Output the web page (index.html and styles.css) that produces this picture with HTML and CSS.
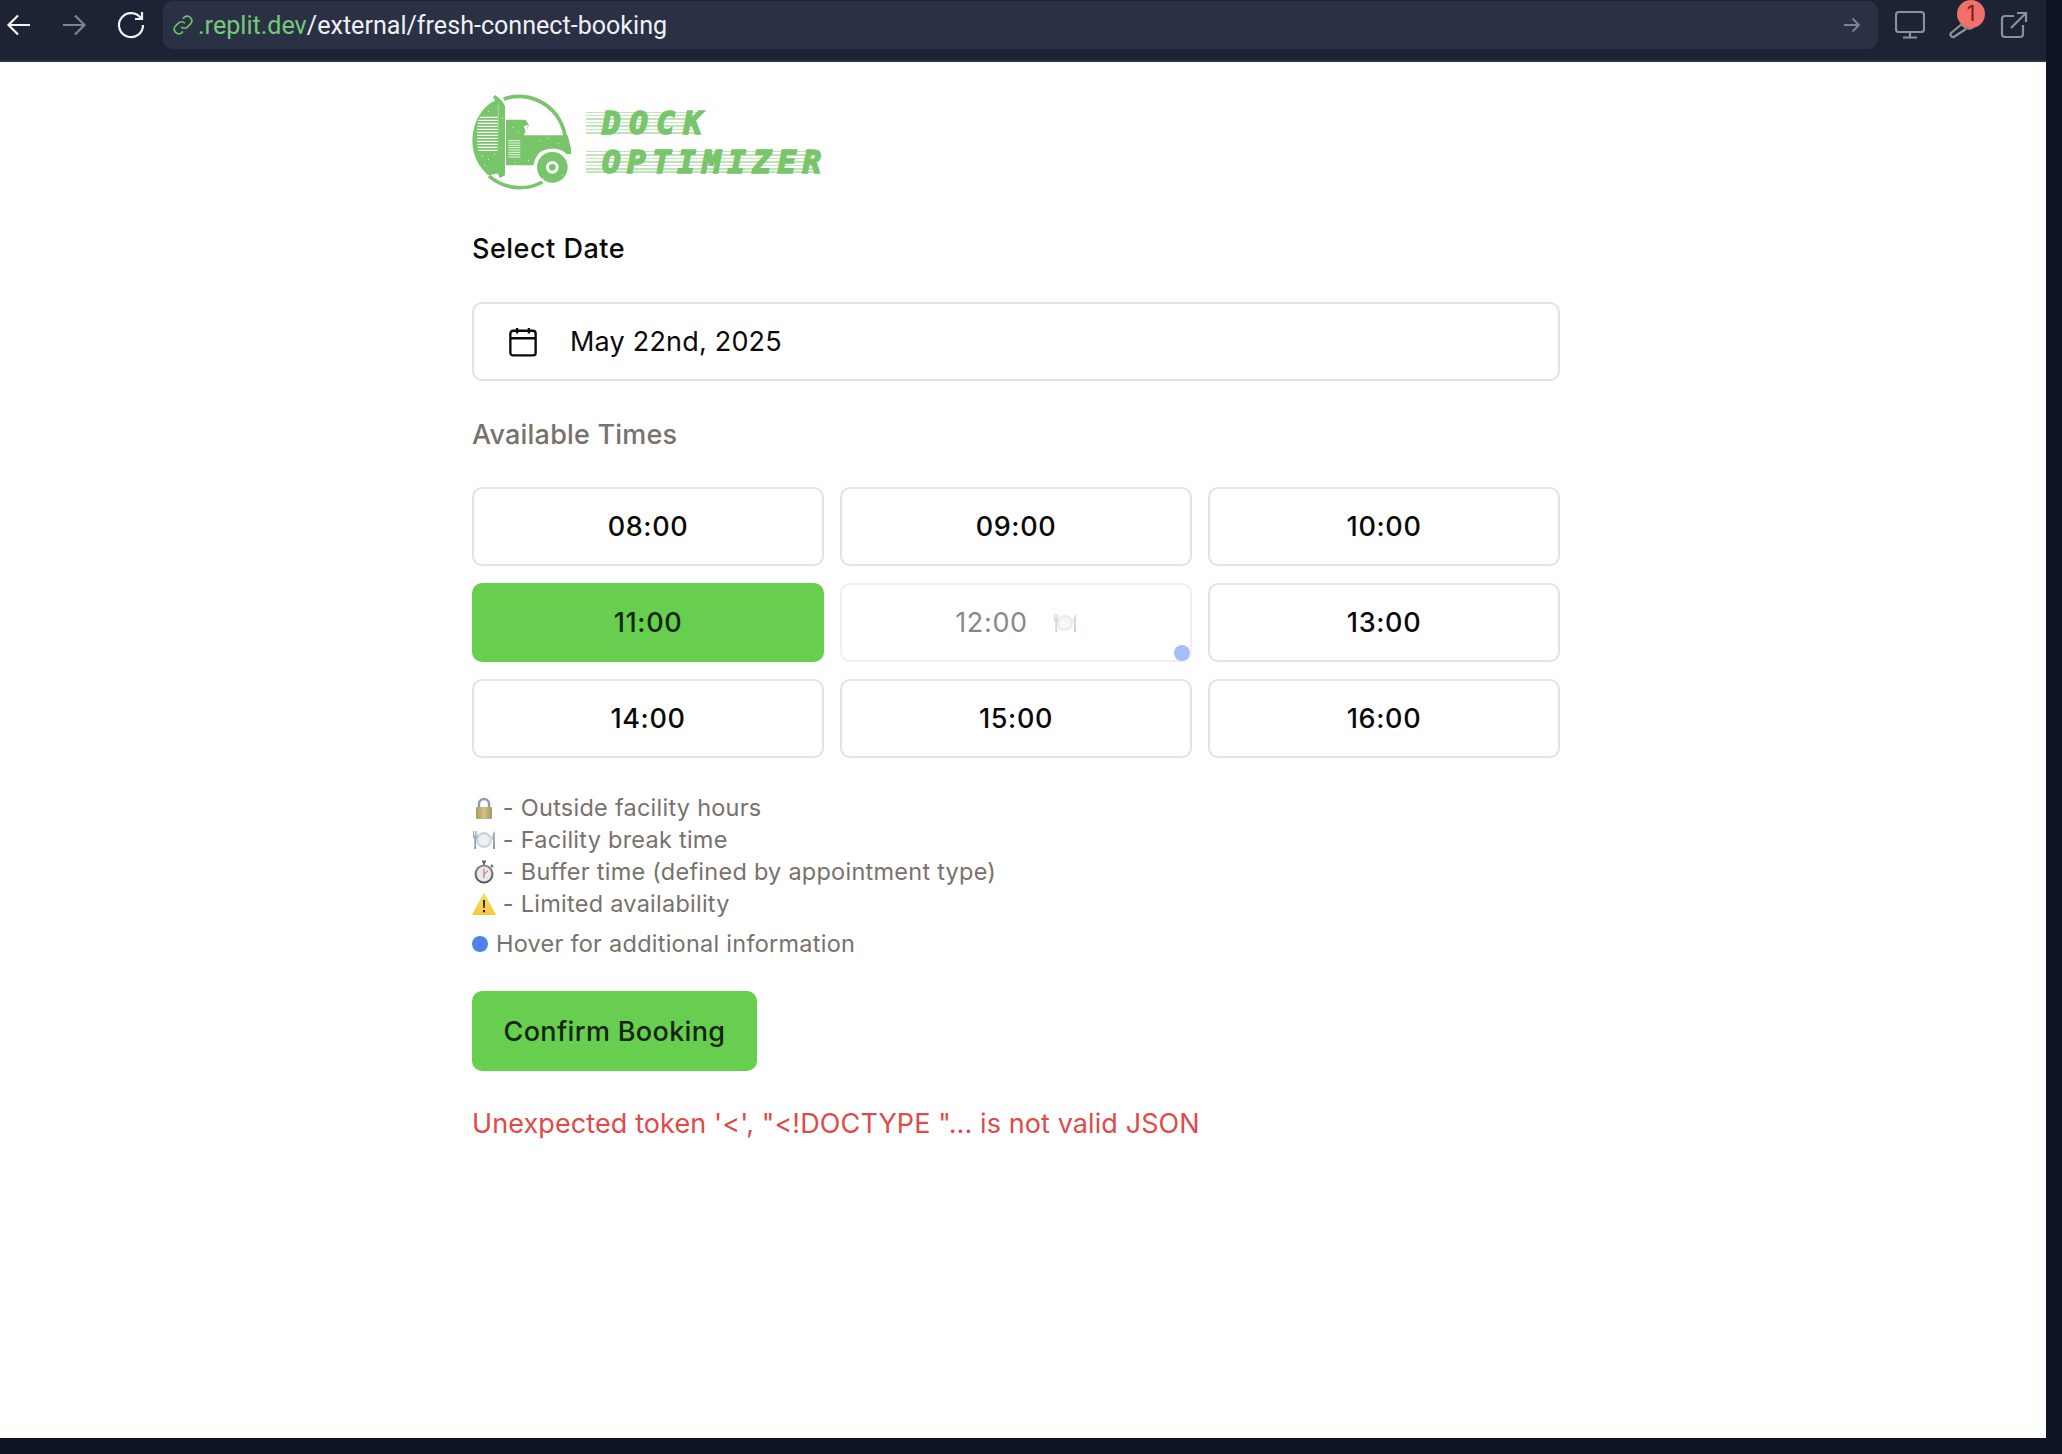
FILE: index.html
```html
<!DOCTYPE html>
<html lang="en">
<head>
<meta charset="utf-8">
<title>Dock Optimizer</title>
<link rel="stylesheet" href="styles.css">
</head>
<body>
<svg class="defs" width="0" height="0" aria-hidden="true">
  <defs>
    <linearGradient id="gold" x1="0" y1="0" x2="1" y2="0"><stop offset="0" stop-color="#a89c58"/><stop offset=".5" stop-color="#cfc488"/><stop offset="1" stop-color="#a3965a"/></linearGradient>
    <linearGradient id="cutlery" x1="0" y1="0" x2="0" y2="1"><stop offset="0" stop-color="#a9bacb"/><stop offset="1" stop-color="#7f95ab"/></linearGradient>
    <linearGradient id="amber" x1="0" y1="0" x2="0" y2="1"><stop offset="0" stop-color="#fbdc6a"/><stop offset="1" stop-color="#f6c83c"/></linearGradient>
    <linearGradient id="steel" x1="0" y1="0" x2="0" y2="1"><stop offset="0" stop-color="#8b8b90"/><stop offset="1" stop-color="#55555a"/></linearGradient>
    <symbol id="i-lock" viewBox="0 0 24 24">
      <path d="M7 12V8a5 5 0 0 1 10 0v4" fill="none" stroke="#8e9bb0" stroke-width="2.4"/>
      <rect x="4" y="11" width="16" height="12" rx="1" fill="url(#gold)"/>
    </symbol>
    <symbol id="i-plate" viewBox="0 0 24 24">
      <circle cx="12" cy="12" r="8" fill="#cfd5dc"/>
      <circle cx="12" cy="12" r="5.600" fill="#eef0f3"/>
      <path d="M1 3v6c0 1 .8 1.600 1.300 2v10h1.800V11c.5-.4 1.300-1 1.300-2V3h-.9v4.500h-.6V3h-.9v4.500h-.6V3z" fill="url(#cutlery)"/>
      <path d="M23 3c-2 1.400-2.800 4-2.800 8.500h.9V21H23z" fill="url(#cutlery)"/>
    </symbol>
    <symbol id="i-watch" viewBox="0 0 24 24">
      <path d="M10 1.500h4M12 2v3M19 5l2 2" stroke="#66666b" stroke-width="2" fill="none"/>
      <circle cx="12" cy="14" r="9.500" fill="url(#steel)"/>
      <circle cx="12" cy="14" r="7.400" fill="#e9e9ec"/>
      <path d="M12 8.500V14l4-3" stroke="#c7654e" stroke-width="1" fill="none"/>
      <path d="M12 14v4" stroke="#77777c" stroke-width="1" fill="none"/>
    </symbol>
    <symbol id="i-warn" viewBox="0 0 24 24">
      <path d="M12 1.500 23.500 22.500H.5z" fill="url(#amber)" stroke="url(#amber)" stroke-linejoin="round"/>
      <path d="M11 8h2l-.3 8h-1.400zM11 18h2v2.200h-2z" fill="#1a1a1a"/>
    </symbol>
  </defs>
</svg>

<div class="frame">
  <header class="toolbar">
    <svg class="nav" viewBox="0 0 28 28"><path d="M25 14H4M13 4.500 3.500 14l9.500 9.500" stroke="#f1f3f6"/></svg>
    <svg class="nav" viewBox="0 0 28 28"><path d="M3 14h21M15 4.500l9.500 9.500-9.500 9.500" stroke="#80848e"/></svg>
    <svg class="nav reload" viewBox="0 0 30 30"><path d="M25 8.500A12 12 0 1 0 27 15M26 2v7h-7" stroke="#f1f3f6"/></svg>
    <div class="address">
      <svg class="link" viewBox="0 0 24 24"><path d="M10 14a5 5 0 0 0 7 0l3.500-3.500a5 5 0 0 0-7-7L12 5M14 10a5 5 0 0 0-7 0l-3.500 3.500a5 5 0 0 0 7 7L12 19"/></svg>
      <span class="url"><span class="host">.replit.dev</span>/external/fresh-connect-booking</span>
      <svg class="go" viewBox="0 0 18 18"><path d="M1 9h15M9.500 2.500 16 9l-6.500 6.500"/></svg>
    </div>
    <div class="tools">
      <svg class="tool" viewBox="0 0 30 28"><rect x="1" y="1" width="28" height="20" rx="3"/><path d="M15 21v5M8 26.500h14"/></svg>
      <div class="wrench">
        <svg class="tool" viewBox="0 0 28 28"><path d="M3 22 14 13a8 8 0 0 0 10 4l1-1M3 22a2.500 2.500 0 0 0 3.500 3.500L18 18"/></svg>
        <span class="badge">1</span>
      </div>
      <svg class="tool" viewBox="0 0 28 28"><path d="M14 5H5a3 3 0 0 0-3 3v15a3 3 0 0 0 3 3h15a3 3 0 0 0 3-3v-9M11 17 26 2M17 2h9v9"/></svg>
    </div>
  </header>

  <main class="page">
    <div class="logo">
      <svg class="truck" viewBox="21 12 300 300">
        <path class="ring" d="M116 33A140 140 0 0 1 301 150"/>
        <path class="ring" d="M72 264A140 140 0 0 0 232 282"/>
        <path class="fill" d="M98 35C55 48 22 100 22 160c0 42 20 78 48 102l34-6z"/>
        <path class="cut" d="M44 88h54M40 97h58M38 106h60M37 115h61M36 124h62M36 133h62M36 142h62M36 151h62M36 160h62M37 169h61M38 178h60M40 187h58"/>
        <path class="fill" d="M84 27 91 21 112 40 120 54V262L105 270 100 262V54z"/>
        <path class="fill" d="M123 95H182L192 112 176 142H308L318 180V198H304C290 178 240 176 222 196 214 206 208 216 206 232H123z"/>
        <path class="paper" d="M176 115 190 110 182 132z"/>
        <path class="cut thin" d="M130 158h36M130 165h36M130 172h36M130 179h36M130 186h36M130 193h36M130 200h36M130 207h36"/>
        <circle class="fill" cx="262" cy="238" r="46"/>
        <circle class="paper" cx="262" cy="238" r="19"/>
        <circle class="fill" cx="262" cy="238" r="10"/>
        <path class="speck" d="M52 205h.1M70 214h.1M88 200h.1M60 232h.1M48 178h.1M144 118h.1M160 132h.1M226 158h.1M280 166h.1M248 152h.1M190 218h.1M150 224h.1M112 90h.1M110 180h.1M236 272h.1M292 262h.1M70 70h.1"/>
      </svg>
      <div class="wordmark">
        <span class="word short">DOCK</span>
        <span class="word">OPTIMIZER</span>
      </div>
    </div>

    <h2 class="label">Select Date</h2>
    <div class="date">
      <svg class="cal" viewBox="0 0 26 28"><rect x="1.200" y="3.500" width="23.600" height="23" rx="2.500"/><path d="M1.200 10.500h23.600M7.500 1v5M18.500 1v5"/></svg>
      <span>May 22nd, 2025</span>
    </div>

    <h2 class="label muted">Available Times</h2>
    <div class="slots">
      <button class="slot">08:00</button>
      <button class="slot">09:00</button>
      <button class="slot">10:00</button>
      <button class="slot active">11:00</button>
      <div class="slot-wrap">
        <button class="slot disabled">12:00<svg class="emoji plate"><use href="#i-plate"/></svg></button>
        <span class="dot"></span>
      </div>
      <button class="slot">13:00</button>
      <button class="slot">14:00</button>
      <button class="slot">15:00</button>
      <button class="slot">16:00</button>
    </div>

    <ul class="legend">
      <li><svg class="emoji"><use href="#i-lock"/></svg> - Outside facility hours</li>
      <li><svg class="emoji"><use href="#i-plate"/></svg> - Facility break time</li>
      <li><svg class="emoji"><use href="#i-watch"/></svg> - Buffer time (defined by appointment type)</li>
      <li><svg class="emoji"><use href="#i-warn"/></svg> - Limited availability</li>
    </ul>
    <p class="hint"><span class="hint-dot"></span>Hover for additional information</p>

    <button class="confirm">Confirm Booking</button>
    <p class="error">Unexpected token '&lt;', "&lt;!DOCTYPE "... is not valid JSON</p>
  </main>
</div>
</body>
</html>
```
FILE: styles.css
```css
* { box-sizing: border-box; }
html, body { margin: 0; height: 100%; }
body { background: #0d1425; overflow: hidden; font-family: Inter, "Liberation Sans", sans-serif; }
.defs { display: block; height: 0; }
.frame { width: 2046px; height: 1438px; display: flex; flex-direction: column; background: #fff; }

.toolbar { height: 62px; flex: none; display: flex; align-items: flex-start; background: #1e2333; border-bottom: 2px solid #2b3144; padding: 1px 0 0 5px; }
.nav { width: 28px; height: 28px; margin-top: 10px; margin-right: 27px; fill: none; flex: none; }
.nav path { stroke-width: 2.2; }
.nav.reload { width: 30px; height: 30px; margin-top: 9px; margin-left: 1px; margin-right: 17px; }
.address { flex: none; width: 1715px; height: 48px; background: #2b3144; border-radius: 10px; display: flex; align-items: center; padding: 0 17px 0 9px; }
.link { width: 22px; height: 22px; fill: none; stroke: #6fbf73; stroke-width: 1.800; margin-right: 4px; flex: none; }
.url { font-family: Roboto, "Liberation Sans", sans-serif; font-size: 25.100px; color: #eef0f4; flex: 1; white-space: nowrap; }
.host { color: #76c878; }
.go { width: 18px; height: 18px; fill: none; stroke: #7f8491; stroke-width: 1.800; flex: none; }
.tools { display: flex; align-items: center; gap: 23px; margin-left: 17px; margin-top: 10px; }
.tool { width: 30px; height: 28px; fill: none; stroke: #8c9099; stroke-width: 2.200; display: block; }
.wrench { position: relative; width: 28px; height: 28px; }
.wrench .tool { width: 28px; }
.badge { position: absolute; left: 9px; top: -11px; width: 28px; height: 28px; border-radius: 50%; background: #f0706a; color: #7a1a16; font-size: 21px; line-height: 28px; text-align: center; }

.page { padding: 30px 0 0 472px; width: 1560px; flex: 1; }
.logo { display: flex; height: 100px; }
.truck { width: 100px; height: 100px; flex: none; }
.truck .ring { fill: none; stroke: #78c56b; stroke-width: 11; }
.truck .fill { fill: #78c56b; }
.truck .paper { fill: #fff; }
.truck .cut { fill: none; stroke: #fff; stroke-width: 3.500; }
.truck .cut.thin { stroke-width: 2.500; }
.truck .speck { fill: none; stroke: #fff; stroke-width: 3; stroke-linecap: round; }
.wordmark { margin-left: 14px; padding-top: 16px; display: flex; flex-direction: column; gap: 9px; align-items: flex-start; }
.word { font-family: "DejaVu Sans Mono", monospace; font-weight: 700; font-style: italic; font-size: 31px; line-height: 30px; height: 30px; letter-spacing: 6.400px; color: #78c56b; -webkit-text-stroke: 1.600px #78c56b; padding-left: 16px; background: repeating-linear-gradient(0deg, #bfe5b8 0 1.500px, #fff 1.500px 3.500px) no-repeat 0 4px / calc(100% - 14px) 22px; }
.word.short { letter-spacing: 8.500px; }

.label { margin: 37px 0 34px; font-size: 27px; line-height: 39px; font-weight: 500; letter-spacing: .5px; color: #0c0a09; }
.label.muted { color: #78716c; margin: 34px 0 33px; letter-spacing: .2px; }
.date { width: 1088px; height: 79px; display: flex; align-items: center; gap: 33px; padding-left: 35px; border: 2px solid #e3e3e3; border-radius: 10px; font-size: 27px; letter-spacing: .2px; color: #0c0a09; }
.cal { width: 28px; height: 30px; fill: none; stroke: #0c0a09; stroke-width: 2.200; flex: none; }

.slots { width: 1088px; display: grid; grid-template-columns: repeat(3, 352px); grid-auto-rows: 79px; gap: 17px 16px; }
.slot { width: 100%; height: 100%; font: 500 27px Inter, "Liberation Sans", sans-serif; letter-spacing: .65px; color: #0c0a09; background: #fff; border: 2px solid #e3e3e3; border-radius: 10px; padding: 0; display: flex; align-items: center; justify-content: center; }
.slot.active { background: #68ce50; border-color: #68ce50; color: #11260c; }
.slot-wrap { position: relative; }
.slot.disabled { opacity: .5; font-weight: 400; border-color: #e3e3e3; color: #111; }
.emoji { width: 24px; height: 24px; flex: none; vertical-align: -4px; }
.emoji.plate { margin-left: 25px; opacity: .85; }
.dot { position: absolute; right: 2px; bottom: 1px; width: 16px; height: 16px; border-radius: 50%; background: #a6bdf8; }

.legend { list-style: none; margin: 34px 0 8px; padding: 0; font-size: 23.500px; line-height: 32px; letter-spacing: .25px; color: #78716c; }
.hint { margin: 0 0 31px; font-size: 23.500px; line-height: 32px; letter-spacing: .25px; color: #78716c; display: flex; align-items: center; gap: 8px; }
.hint-dot { width: 16px; height: 16px; border-radius: 50%; background: #4f80ee; flex: none; }
.confirm { display: block; height: 80px; width: 285px; border: 0; border-radius: 10px; background: #68ce50; font: 500 27px Inter, "Liberation Sans", sans-serif; letter-spacing: .35px; color: #11260c; padding: 0; }
.error { margin: 33px 0 0; font-size: 27px; line-height: 39px; letter-spacing: .1px; color: #e04a48; }
```
